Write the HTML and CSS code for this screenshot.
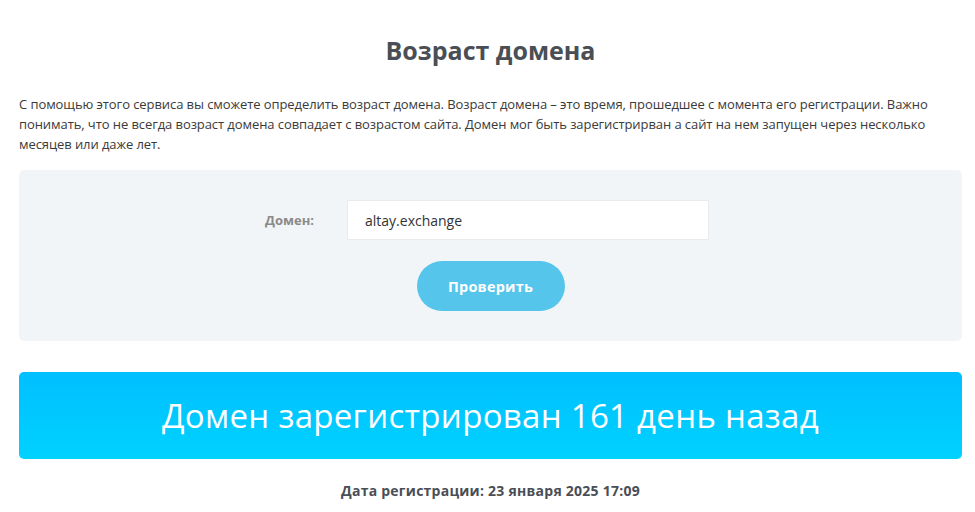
FILE: index.html
```html
<!DOCTYPE html>
<html lang="ru">
<head>
    <meta charset="UTF-8">
    <meta name="viewport" content="width=device-width, initial-scale=1.0">
    <title>Возраст домена</title>
    <link rel="stylesheet" href="styles.css">
</head>
<body>
    <div class="container">
        <h1>Возраст домена</h1>
        <p class="intro">С помощью этого сервиса вы сможете определить возраст домена. Возраст домена – это время, прошедшее с момента его регистрации. Важно понимать, что не всегда возраст домена совпадает с возрастом сайта. Домен мог быть зарегистрирван а сайт на нем запущен через несколько месяцев или даже лет.</p>

        <div class="form-box">
            <div class="form-row">
                <label for="domain">Домен:</label>
                <input type="text" id="domain" value="altay.exchange">
            </div>
            <button class="btn">Проверить</button>
        </div>

        <div class="result">Домен зарегистрирован 161 день назад</div>
        <div class="reg-date">Дата регистрации: 23 января 2025 17:09</div>
    </div>
</body>
</html>
```

FILE: styles.css
```css
body {
    font-family: 'Open Sans', sans-serif;
    color: #333;
    background-color: #fff;
    margin: 0;
    padding: 0;
}

.container {
    padding: 0 13px 0 19px;
}

h1 {
    margin: 0;
    padding-top: 34px;
    height: 58px;
    font-family: 'Open Sans', sans-serif;
    font-size: 25px;
    font-weight: 700;
    color: #4a4e55;
    text-align: center;
    line-height: 32px;
}

.intro {
    margin: 0;
    padding-top: 2px;
    font-size: 13px;
    line-height: 20px;
    letter-spacing: -0.08px;
    color: #3a3a3a;
}

.form-box {
    margin-top: 16px;
    background-color: #f2f5f7;
    border-radius: 5px;
    padding: 30px 0 30px;
    display: flex;
    flex-direction: column;
    align-items: center;
}

.form-row {
    display: flex;
    align-items: center;
    margin-left: -48px;
}

.form-row label {
    width: 90px;
    text-align: right;
    margin-right: 33px;
    font-size: 13px;
    font-weight: 700;
    color: #8a8a8a;
}

.form-row input {
    box-sizing: border-box;
    width: 362px;
    height: 40px;
    padding: 0 17px;
    border: 1px solid #e9ecee;
    background: #fff;
    font-family: 'Open Sans', sans-serif;
    font-size: 14px;
    color: #333;
    outline: none;
}

.btn {
    margin-top: 21px;
    width: 148px;
    height: 50px;
    border: none;
    border-radius: 25px;
    background-color: #55c5ec;
    color: #fff;
    font-family: 'Open Sans', sans-serif;
    font-size: 14.5px;
    font-weight: 700;
    letter-spacing: 0.2px;
    cursor: pointer;
}

.result {
    margin-top: 31px;
    height: 87px;
    border-radius: 5px;
    background: linear-gradient(to bottom, #00bfff, #00d2ff);
    color: #fff;
    font-size: 33px;
    font-weight: 400;
    letter-spacing: 0.3px;
    text-align: center;
    line-height: 87px;
}

.reg-date {
    margin-top: 22px;
    text-align: center;
    font-size: 14px;
    font-weight: 700;
    letter-spacing: 0.25px;
    color: #4a4e55;
}
```
